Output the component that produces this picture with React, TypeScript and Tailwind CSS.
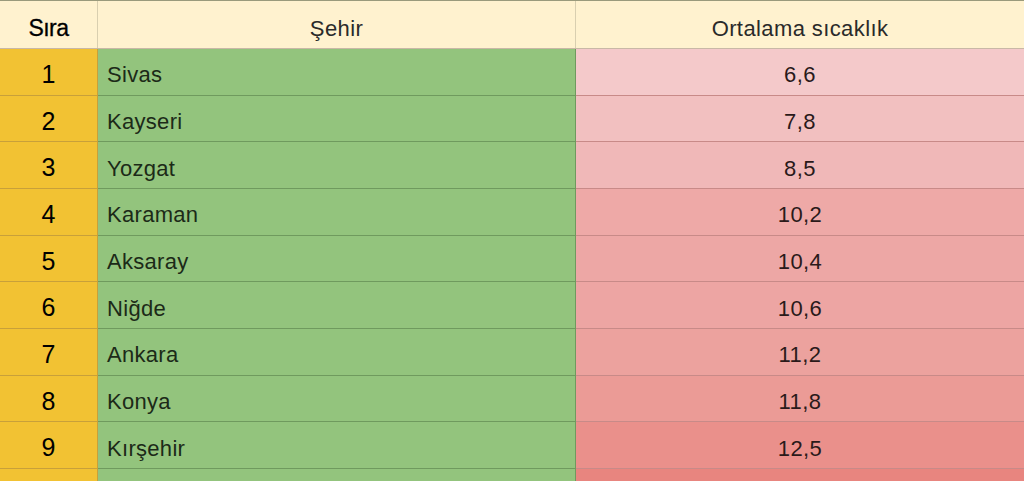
const rows = [
  { sira: 1, sehir: 'Sivas', deger: '6,6', bg: 'bg-[#f4c9ca]' },
  { sira: 2, sehir: 'Kayseri', deger: '7,8', bg: 'bg-[#f2c0c0]' },
  { sira: 3, sehir: 'Yozgat', deger: '8,5', bg: 'bg-[#f0b8b8]' },
  { sira: 4, sehir: 'Karaman', deger: '10,2', bg: 'bg-[#eea9a7]' },
  { sira: 5, sehir: 'Aksaray', deger: '10,4', bg: 'bg-[#eda7a5]' },
  { sira: 6, sehir: 'Niğde', deger: '10,6', bg: 'bg-[#eda5a3]' },
  { sira: 7, sehir: 'Ankara', deger: '11,2', bg: 'bg-[#eca29e]' },
  { sira: 8, sehir: 'Konya', deger: '11,8', bg: 'bg-[#eb9b96]' },
  { sira: 9, sehir: 'Kırşehir', deger: '12,5', bg: 'bg-[#ea908b]' },
];

export default function App() {
  return (
    <div
      className="w-[1024px] h-[481px] overflow-hidden bg-white text-[#1f1f1f] border-t border-[#9a9a7c]"
      style={{ fontFamily: '"Liberation Sans", Arial, sans-serif' }}
    >
      {/* Başlık satırı */}
      <div className="grid grid-cols-[98px_478px_1fr] h-[48px] bg-[#fff2cf] border-b border-[#c9b8a6]">
        <div className="flex items-center justify-center pt-[7px] border-r border-[#d9cfb0] text-[23px] tracking-[-0.6px] text-black [-webkit-text-stroke:0.3px_black]">
          Sıra
        </div>
        <div className="flex items-center justify-center pt-[7px] border-r border-[#d9cfb0] text-[22px] tracking-[0.4px] text-[#2a2a2a]">
          Şehir
        </div>
        <div className="flex items-center justify-center pt-[7px] text-[22px] tracking-[0.4px] text-[#2a2a2a]">
          Ortalama sıcaklık
        </div>
      </div>

      {rows.map((r) => (
        <div key={r.sira} className="grid grid-cols-[98px_478px_1fr] h-[46.67px]">
          <div className="flex items-center justify-center pt-[6px] bg-[#f2c233] border-r border-b border-[#c8a03a] text-[25px] text-black">
            {r.sira}
          </div>
          <div className="flex items-center pl-[9px] pt-[6px] bg-[#93c47d] border-r border-b border-[#6f9a5e] text-[22px] tracking-[0.3px] text-[#1c2a18]">
            {r.sehir}
          </div>
          <div className={`flex items-center justify-center pt-[6px] border-b border-[#c88a88] text-[22px] tracking-[0.4px] text-[#2a1a1a] ${r.bg}`}>
            {r.deger}
          </div>
        </div>
      ))}

      {/* Kısmen görünen 10. satır */}
      <div className="grid grid-cols-[98px_478px_1fr] h-[46.67px]">
        <div className="bg-[#f2c233] border-r border-[#c8a03a]" />
        <div className="bg-[#93c47d] border-r border-[#6f9a5e]" />
        <div className="bg-[#e8857f]" />
      </div>
    </div>
  );
}
